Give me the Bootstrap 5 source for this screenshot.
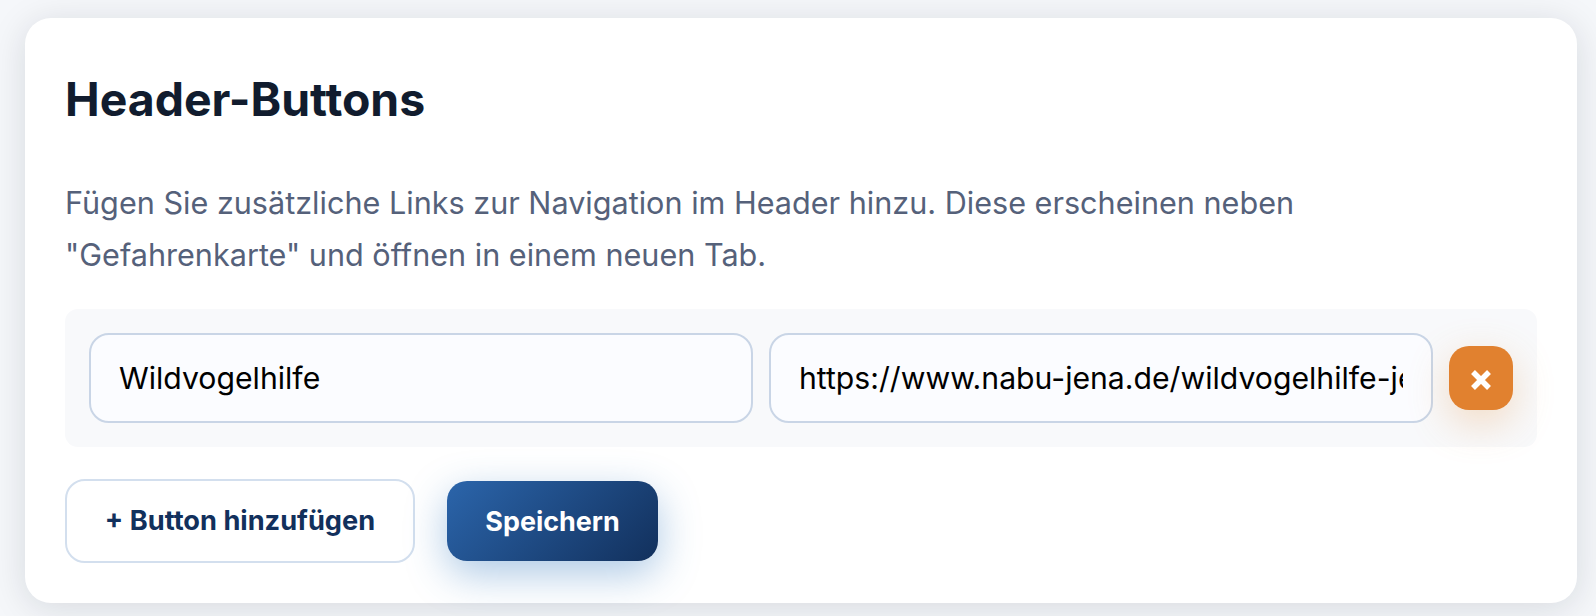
<!DOCTYPE html>
<html lang="de">
<head>
<meta charset="utf-8">
<title>Header-Buttons</title>
<link href="https://cdn.jsdelivr.net/npm/bootstrap@5.3.0/dist/css/bootstrap.min.css" rel="stylesheet">
<style>
html, body { height: 616px; overflow: hidden; }
body { background: #f5f7fa; font-family: Inter, "Liberation Sans", sans-serif; padding: 18px 19px 0 25px; }
.panel { height: 585px; border: 0; border-radius: 26px; padding: 40px; background: #fff; box-shadow: 0 5px 36px rgba(17, 24, 39, .13); }
.panel-title { font-size: 46.4px; font-weight: 700; line-height: 82px; color: #111c2e; margin: 0 0 37px; }
.panel-text { font-size: 30.6px; line-height: 51.7px; color: #55617a; margin: 0 0 29px; }
.link-row { background: #f8f9fb; border-radius: 13px; padding: 24px; }
.field { height: 90px; padding: 0 28px; font-size: 30.2px; color: #000; background: #fbfcff; border: 2px solid #c9d5e6; border-radius: 20px; }
.remove-btn { width: 64px; height: 64px; flex: none; padding: 0; border: 0; border-radius: 20px; background: #e1812f; color: #fff; box-shadow: 0 13px 40px rgba(230, 150, 70, .3); }
.add-btn { height: 84px; width: 350px; padding: 0; font-size: 27.2px; font-weight: 700; color: #12305c; background: #fff; border: 2px solid #d3dfee; border-radius: 20px; }
.save-btn { height: 80px; width: 211px; padding: 0; font-size: 26.9px; font-weight: 700; color: #fff; border: 0; border-radius: 20px; background: linear-gradient(135deg, #2b65ab, #12305c); box-shadow: 0 13px 40px rgba(50, 120, 190, .4); }
.actions { margin-top: 32px; gap: 32px; }
</style>
</head>
<body>
<div class="card panel">
  <h2 class="panel-title">Header-Buttons</h2>
  <p class="panel-text">Fügen Sie zusätzliche Links zur Navigation im Header hinzu. Diese erscheinen neben<br>"Gefahrenkarte" und öffnen in einem neuen Tab.</p>
  <div class="link-row d-flex align-items-center gap-3">
    <input class="form-control field" type="text" value="Wildvogelhilfe">
    <input class="form-control field" type="text" value="https://www.nabu-jena.de/wildvogelhilfe-jena">
    <button class="btn remove-btn d-flex align-items-center justify-content-center" type="button" aria-label="Entfernen">
      <svg width="22" height="22" viewBox="0 0 22 22" class="mt-1"><path d="M3 3 19 19M19 3 3 19" stroke="#fff" stroke-width="5.5" fill="none"/></svg>
    </button>
  </div>
  <div class="actions d-flex align-items-center">
    <button class="btn add-btn" type="button">+ Button hinzufügen</button>
    <button class="btn save-btn" type="button">Speichern</button>
  </div>
</div>
<script src="https://cdn.jsdelivr.net/npm/bootstrap@5.3.0/dist/js/bootstrap.bundle.min.js"></script>
</body>
</html>
